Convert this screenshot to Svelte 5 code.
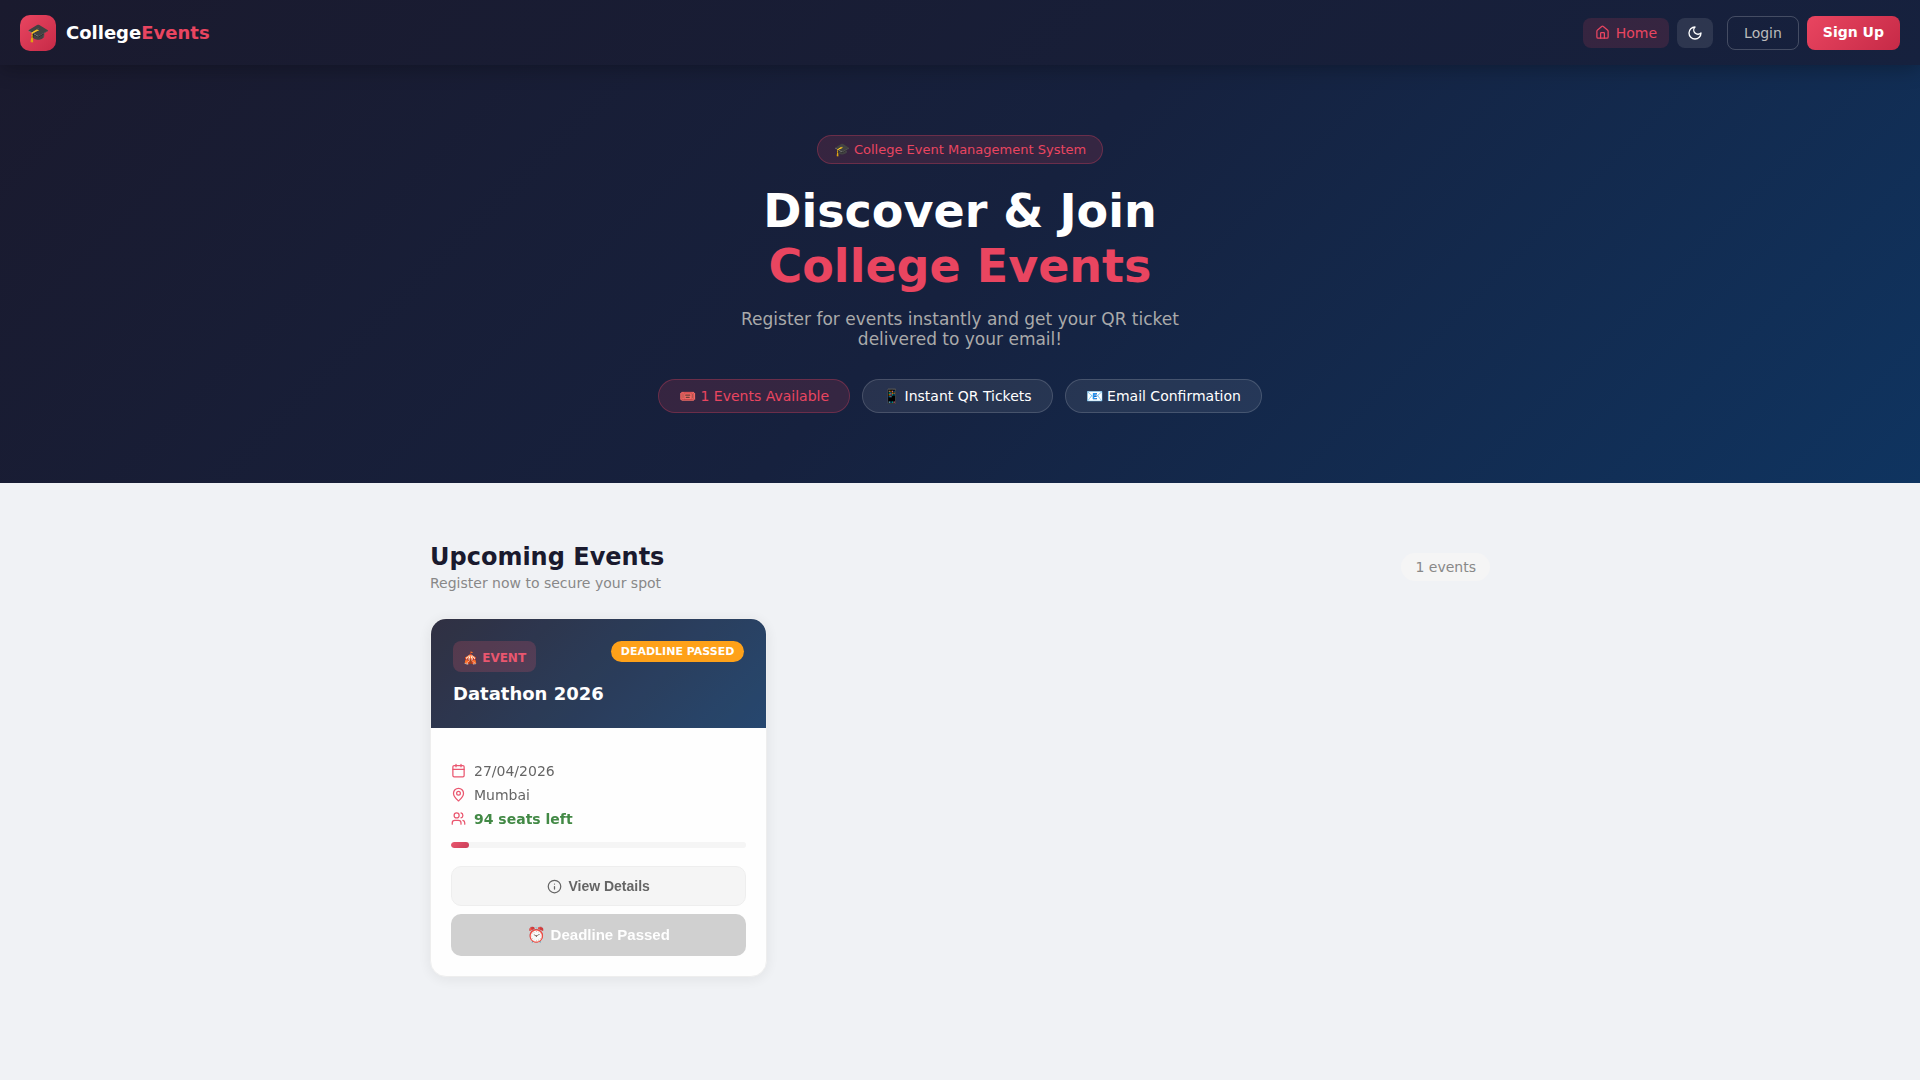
<script>
  const features = [
    { text: '🎟️ 1 Events Available', accent: true },
    { text: '📱 Instant QR Tickets', accent: false },
    { text: '📧 Email Confirmation', accent: false }
  ];

  const events = [
    { title: 'Datathon 2026', date: '27/04/2026', place: 'Mumbai', seatsLeft: 94, filled: 6 }
  ];
</script>

<nav class="navbar">
  <a class="brand" href="#home">
    <span class="brand-mark">🎓</span>
    <span>College<em>Events</em></span>
  </a>
  <div class="nav-actions">
    <a class="nav-link" href="#home">
      <svg viewBox="0 0 24 24" width="15" height="15"><path d="M15 21v-8a1 1 0 0 0-1-1h-4a1 1 0 0 0-1 1v8" /><path d="M3 10a2 2 0 0 1 .709-1.528l7-6a2 2 0 0 1 2.582 0l7 6A2 2 0 0 1 21 10v9a2 2 0 0 1-2 2H5a2 2 0 0 1-2-2z" /></svg>
      Home
    </a>
    <button class="theme-toggle" aria-label="Switch to dark mode">
      <svg viewBox="0 0 24 24" width="16" height="16"><path d="M12 3a6 6 0 0 0 9 9 9 9 0 1 1-9-9Z" /></svg>
    </button>
    <div class="auth">
      <a class="login" href="#login">Login</a>
      <a class="signup" href="#signup">Sign Up</a>
    </div>
  </div>
</nav>

<header class="hero">
  <div class="hero-badge">🎓 College Event Management System</div>
  <h1>Discover &amp; Join<br /><span>College Events</span></h1>
  <p>Register for events instantly and get your QR ticket delivered to your email!</p>
  <div class="features">
    {#each features as feature}
      <span class="feature" class:accent={feature.accent}>{feature.text}</span>
    {/each}
  </div>
</header>

<main>
  <div class="section-head">
    <div>
      <h2>Upcoming Events</h2>
      <p>Register now to secure your spot</p>
    </div>
    <span class="count">{events.length} events</span>
  </div>

  <div class="grid">
    {#each events as event}
      <article class="card">
        <div class="card-top">
          <div class="tags">
            <span class="type">🎪 EVENT</span>
            <span class="status">DEADLINE PASSED</span>
          </div>
          <h3>{event.title}</h3>
        </div>
        <div class="card-body">
          <ul>
            <li>
              <svg viewBox="0 0 24 24" width="15" height="15"><path d="M8 2v4M16 2v4M3 10h18" /><rect x="3" y="4" width="18" height="18" rx="2" /></svg>
              {event.date}
            </li>
            <li>
              <svg viewBox="0 0 24 24" width="15" height="15"><path d="M20 10c0 5-5.5 10.2-7.4 11.8a1 1 0 0 1-1.2 0C9.500 20.200 4 15 4 10a8 8 0 0 1 16 0" /><circle cx="12" cy="10" r="3" /></svg>
              {event.place}
            </li>
            <li class="seats">
              <svg viewBox="0 0 24 24" width="15" height="15"><path d="M16 21v-2a4 4 0 0 0-4-4H6a4 4 0 0 0-4 4v2" /><circle cx="9" cy="7" r="4" /><path d="M22 21v-2a4 4 0 0 0-3-3.870M16 3.130a4 4 0 0 1 0 7.750" /></svg>
              {event.seatsLeft} seats left
            </li>
          </ul>
          <div class="progress"><div class="fill" style="width: {event.filled}%"></div></div>
          <button class="details">
            <svg viewBox="0 0 24 24" width="15" height="15"><circle cx="12" cy="12" r="10" /><path d="M12 16v-4M12 8h.01" /></svg>
            View Details
          </button>
          <button class="register" disabled>⏰ Deadline Passed</button>
        </div>
      </article>
    {/each}
  </div>
</main>

<style>
  :global(body) {
    margin: 0;
    background: #f0f2f5;
    font-family: 'DejaVu Sans', sans-serif;
  }
  h1, h2, h3, p, ul {
    margin: 0;
    padding: 0;
  }
  a {
    text-decoration: none;
  }
  svg {
    flex: none;
    fill: none;
    stroke: currentColor;
    stroke-width: 2;
    stroke-linecap: round;
    stroke-linejoin: round;
  }

  .navbar {
    position: relative;
    z-index: 1;
    display: flex;
    align-items: center;
    justify-content: space-between;
    box-sizing: border-box;
    height: 65px;
    padding: 0 20px;
    background: linear-gradient(135deg, #1a1a2e, #16213e);
    box-shadow: 0 2px 20px rgba(0, 0, 0, 0.3);
  }
  .brand {
    display: flex;
    align-items: center;
    gap: 10px;
    color: #fff;
    font-size: 18px;
    font-weight: 700;
  }
  .brand em {
    color: #e94560;
    font-style: normal;
  }
  .brand-mark {
    display: flex;
    align-items: center;
    justify-content: center;
    width: 36px;
    height: 36px;
    border-radius: 10px;
    background: linear-gradient(135deg, #e94560, #c62a47);
    font-weight: 400;
  }
  .nav-actions, .auth {
    display: flex;
    align-items: center;
    gap: 8px;
  }
  .auth {
    margin-left: 6px;
  }
  .nav-link {
    display: flex;
    align-items: flex-start;
    gap: 6px;
    padding: 7px 12px;
    border-radius: 8px;
    background: rgba(233, 69, 96, 0.15);
    color: #e94560;
    font-size: 14px;
    line-height: 16px;
  }
  .theme-toggle {
    display: flex;
    align-items: center;
    justify-content: center;
    width: 36px;
    height: 30px;
    padding: 0;
    border: 0;
    border-radius: 8px;
    background: rgba(255, 255, 255, 0.1);
    color: #fff;
  }
  .login, .signup {
    font-size: 14px;
    line-height: 16px;
    border-radius: 8px;
  }
  .login {
    padding: 8px 16px;
    border: 1px solid rgba(255, 255, 255, 0.2);
    color: #bbb;
  }
  .signup {
    padding: 8px 16px 10px;
    background: linear-gradient(135deg, #e94560, #c62a47);
    color: #fff;
    font-weight: 700;
  }

  .hero {
    display: flex;
    flex-direction: column;
    align-items: center;
    padding: 70px 20px;
    background: linear-gradient(135deg, #1a1a2e 0%, #16213e 50%, #0f3460 100%);
    text-align: center;
  }
  .hero-badge {
    padding: 6px 16px;
    border: 1px solid rgba(233, 69, 96, 0.3);
    border-radius: 20px;
    background: rgba(233, 69, 96, 0.15);
    color: #e94560;
    font-size: 13px;
    line-height: 15px;
  }
  h1 {
    margin-top: 20px;
    color: #fff;
    font-size: 46px;
    line-height: 55px;
  }
  h1 span {
    color: #e94560;
  }
  .hero p {
    max-width: 500px;
    margin-top: 15px;
    color: #aaa;
    font-size: 17px;
    line-height: 20px;
  }
  .features {
    display: flex;
    flex-wrap: wrap;
    justify-content: center;
    gap: 12px;
    margin-top: 30px;
  }
  .feature {
    padding: 8px 20px;
    border: 1px solid rgba(255, 255, 255, 0.15);
    border-radius: 20px;
    background: rgba(255, 255, 255, 0.08);
    color: #fff;
    font-size: 14px;
    line-height: 16px;
  }
  .feature.accent {
    border-color: rgba(233, 69, 96, 0.3);
    background: rgba(233, 69, 96, 0.15);
    color: #e94560;
  }

  main {
    box-sizing: border-box;
    max-width: 1100px;
    margin: 0 auto;
    padding: 60px 20px;
  }
  .section-head {
    display: flex;
    align-items: center;
    justify-content: space-between;
    margin-bottom: 27px;
  }
  h2 {
    color: #1a1a2e;
    font-size: 24px;
    line-height: 28px;
  }
  .section-head p {
    margin-top: 4px;
    color: #888;
    font-size: 14px;
    line-height: 16px;
  }
  .count {
    padding: 6px 14px;
    border-radius: 20px;
    background: #f5f5f5;
    color: #888;
    font-size: 14px;
    line-height: 16px;
  }
  .grid {
    display: grid;
    grid-template-columns: repeat(auto-fill, minmax(300px, 1fr));
    gap: 24px;
  }
  .card {
    overflow: hidden;
    border: 1px solid #eee;
    border-radius: 16px;
    background: #fff;
    box-shadow: 0 2px 16px rgba(0, 0, 0, 0.08);
    opacity: 0.9;
  }
  .card-top {
    padding: 22px 22px 24px;
    background: linear-gradient(135deg, #1a1a2e, #0f3460);
  }
  .tags {
    display: flex;
    align-items: flex-start;
    justify-content: space-between;
    margin-bottom: 11px;
  }
  .type {
    padding: 10px 10px 7px;
    border-radius: 8px;
    background: rgba(233, 69, 96, 0.2);
    color: #e94560;
    font-size: 12px;
    font-weight: 700;
    line-height: 14px;
  }
  .status {
    padding: 4px 10px;
    border-radius: 20px;
    background: #ff9800;
    color: #fff;
    font-size: 11px;
    font-weight: 700;
    line-height: 13px;
  }
  h3 {
    color: #fff;
    font-size: 18px;
    line-height: 21px;
  }
  .card-body {
    display: flex;
    flex-direction: column;
    padding: 35px 20px 20px;
  }
  ul {
    display: flex;
    flex-direction: column;
    gap: 8px;
    list-style: none;
  }
  li {
    display: flex;
    align-items: flex-start;
    gap: 8px;
    color: #555;
    font-size: 14px;
    line-height: 16px;
  }
  li svg {
    color: #e94560;
  }
  .seats {
    color: #2e7d32;
    font-weight: 700;
  }
  .progress {
    height: 6px;
    margin: 15px 0 18px;
    overflow: hidden;
    border-radius: 3px;
    background: #f5f5f5;
  }
  .fill {
    height: 100%;
    border-radius: 3px;
    background: linear-gradient(135deg, #e94560, #c62a47);
  }
  .details, .register {
    font-family: 'Liberation Sans', sans-serif;
    font-weight: 700;
    border-radius: 10px;
  }
  .details {
    display: flex;
    align-items: center;
    justify-content: center;
    gap: 6px;
    padding: 11px;
    border: 1px solid #eee;
    background: #f5f5f5;
    color: #555;
    font-size: 14px;
    line-height: 16px;
  }
  .register {
    margin-top: 8px;
    padding: 12px;
    border: 0;
    background: #ccc;
    color: #fff;
    font-size: 15px;
    line-height: 18px;
  }
</style>
